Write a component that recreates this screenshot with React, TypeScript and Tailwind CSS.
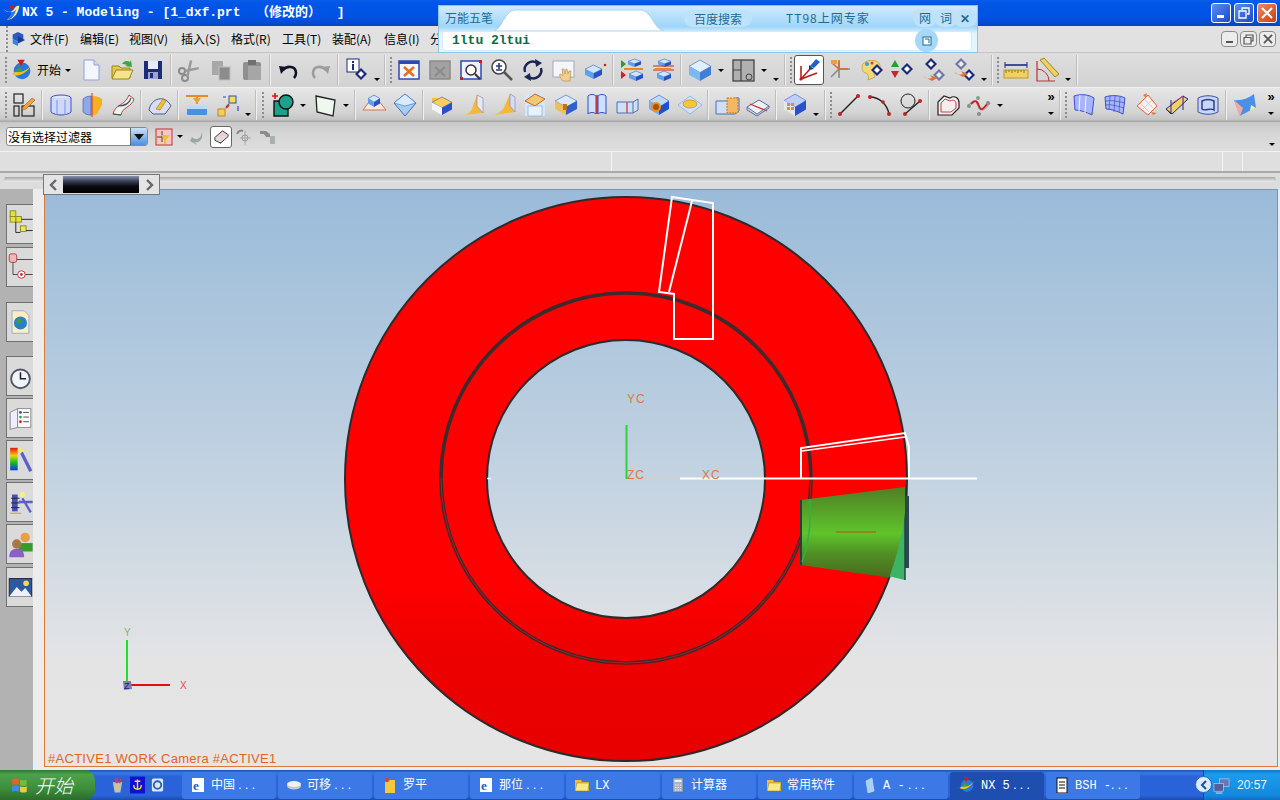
import React from 'react';

const I = ({ children }: { children: React.ReactNode }) => (
  <svg viewBox="0 0 26 26" className="w-[26px] h-[26px]">{children}</svg>
);

// isometric box used by most of the modeling icons
const Cube = ({ x = 4, y = 5, w = 18, h = 16, top = '#cfe6fb', left = '#5f9ff0', right = '#2450c8' }: { x?: number; y?: number; w?: number; h?: number; top?: string; left?: string; right?: string }) => {
  const d = h * 0.3;
  return (
    <g>
      <polygon points={`${x},${y + d} ${x + w / 2},${y} ${x + w},${y + d} ${x + w / 2},${y + 2 * d}`} fill={top} stroke="#3a62b8" strokeWidth="0.6" />
      <polygon points={`${x},${y + d} ${x + w / 2},${y + 2 * d} ${x + w / 2},${y + h} ${x},${y + h - d}`} fill={left} />
      <polygon points={`${x + w},${y + d} ${x + w / 2},${y + 2 * d} ${x + w / 2},${y + h} ${x + w},${y + h - d}`} fill={right} />
    </g>
  );
};

const Diamond = ({ x, y, fade }: { x: number; y: number; fade?: boolean }) => (
  <g opacity={fade ? 0.55 : 1}>
    <polygon points={`${x},${y - 6} ${x + 6},${y} ${x},${y + 6} ${x - 6},${y}`} fill="#1c2a7a" />
    <polygon points={`${x},${y - 3} ${x + 3},${y} ${x},${y + 3} ${x - 3},${y}`} fill="#ffffff" />
  </g>
);

const Globe = () => (
  <g>
    <circle cx="13" cy="14" r="9" fill="#2a78d8" />
    <path d="M7 12c3-3 6-1 6 2s-3 6-5 4z" fill="#3aa23a" />
    <path d="M2 17C7 22 20 17 24 5c-2 7-12 12-18 10z" fill="#f0c020" />
    <polygon points="8,2 16,2 12,9" fill="#d81818" />
  </g>
);

const Toolbar1 = {
  page: <I><path d="M6 3h10l5 5v15H6z" fill="#f4f6ff" stroke="#8fa0d8" /><path d="M16 3v5h5" fill="#d6dcf6" stroke="#8fa0d8" /></I>,
  open: <I><path d="M3 9h7l2 2h9v10H3z" fill="#e8c848" stroke="#9a8420" /><path d="M7 13h17l-4 9H3z" fill="#f6e48a" stroke="#9a8420" /><path d="M13 7c3-4 6-3 8-2l1-2 1 7-7-1 2-1c-2-1-3-1-5-1z" fill="#3ca83c" /></I>,
  save: <I><rect x="4" y="4" width="18" height="18" fill="#1c2c78" /><rect x="8" y="4" width="10" height="8" fill="#e8ecf8" /><rect x="8" y="15" width="10" height="7" fill="#9aa6c8" /><rect x="10" y="16" width="3" height="5" fill="#1c2c78" /></I>,
  cut: <I><circle cx="8" cy="21" r="3" fill="none" stroke="#8c8c8c" strokeWidth="2" /><circle cx="5" cy="14" r="3" fill="none" stroke="#8c8c8c" strokeWidth="2" /><path d="M9 19 16 4M8 13l14 0" stroke="#9a9a9a" strokeWidth="2.5" transform="rotate(-12 13 13)" /></I>,
  copy: <I><rect x="4" y="4" width="11" height="14" fill="#a8a8a8" /><rect x="11" y="10" width="11" height="13" fill="#8c8c8c" stroke="#bdbdbd" /></I>,
  paste: <I><rect x="4" y="5" width="18" height="18" rx="2" fill="#8f8f8f" /><rect x="9" y="3" width="8" height="5" fill="#6f6f6f" /><rect x="9" y="9" width="13" height="14" fill="#a6a6a6" /></I>,
  undo: <I><path d="M7 13c4-5 13-4 13 3 0 2-1 4-2 5" fill="none" stroke="#10142a" strokeWidth="2.6" /><polygon points="3,9 11,10 5,17" fill="#10142a" /></I>,
  redo: <I><path d="M19 13c-4-5-13-4-13 3 0 2 1 4 2 5" fill="none" stroke="#9c9c9c" strokeWidth="2.6" /><polygon points="23,9 15,10 21,17" fill="#9c9c9c" /></I>,
  info: <I><rect x="3" y="2" width="12" height="13" fill="#fff" stroke="#1c2a7a" /><rect x="8" y="4" width="2" height="2" fill="#1c2a7a" /><rect x="8" y="7" width="2" height="6" fill="#1c2a7a" /><Diamond x={17} y={17} /></I>,
  fit: <I><rect x="3" y="4" width="20" height="18" fill="#f4f6ff" stroke="#2a4ab0" strokeWidth="1.5" /><rect x="3" y="4" width="20" height="3" fill="#2a4ab0" /><path d="M8 10l10 9M18 10 8 19" stroke="#e8701a" strokeWidth="2.6" /></I>,
  fitOff: <I><rect x="3" y="4" width="20" height="18" fill="#a2a2a2" stroke="#8a8a8a" strokeWidth="1.5" /><path d="M8 10l10 9M18 10 8 19" stroke="#8a8a8a" strokeWidth="2" /></I>,
  zoomWin: <I><rect x="3" y="4" width="20" height="18" fill="#eef3ff" stroke="#2a4ab0" strokeWidth="1.5" /><circle cx="13" cy="13" r="5" fill="#fff" stroke="#333" strokeWidth="1.5" /><path d="m17 17 5 5" stroke="#333" strokeWidth="2" /><rect x="2" y="20" width="3" height="3" fill="#c82020" /><rect x="21" y="3" width="3" height="3" fill="#c82020" /></I>,
  zoom: <I><circle cx="10" cy="10" r="7" fill="#fff" stroke="#444" strokeWidth="1.6" /><path d="M7 9h6M10 6v6M7 13h6" stroke="#2a3a70" strokeWidth="1.6" /><path d="m15 15 8 8" stroke="#555" strokeWidth="2.6" /></I>,
  rotate: <I><path d="M5 15a8 8 0 0 1 12-9M21 11a8 8 0 0 1-12 9" fill="none" stroke="#1a2550" strokeWidth="2.4" /><polygon points="15,2 22,6 16,10" fill="#1a2550" /><polygon points="11,24 4,20 10,16" fill="#1a2550" /></I>,
  pan: <I><rect x="2" y="4" width="21" height="16" fill="#f4f6fb" stroke="#a8a8c0" /><path d="M12 24c-3-3-4-6-3-7 1 0 2 1 3 2l-1-7h2l1 5 1-5h1l1 5 1-3h2l-1 10z" fill="#f2cf90" stroke="#b08840" strokeWidth="0.6" /></I>,
  persp: <I><Cube x={3} y={8} w={17} h={14} /><circle cx="23" cy="8" r="1.3" fill="#d02020" /></I>,
  stack1: <I><polygon points="2,3 7,7 2,11" fill="#22a030" /><polygon points="2,14 7,18 2,22" fill="#d02020" /><Cube x={9} y={2} w={13} h={8} /><rect x="5" y="11" width="19" height="2" fill="#e88a20" /><Cube x={10} y={14} w={14} h={10} /></I>,
  stack2: <I><Cube x={8} y={2} w={13} h={8} /><path d="M3 13h21M3 9h21" stroke="#d02020" strokeWidth="1" /><rect x="5" y="11" width="16" height="2" fill="#e88a20" /><Cube x={7} y={14} w={14} h={10} /></I>,
  cube: <I><Cube x={2} y={3} w={22} h={21} top="#e0f0fc" left="#7ab8f0" right="#3f7fd8" /></I>,
  sheet: <I><rect x="3" y="3" width="21" height="21" fill="#b0b0b0" stroke="#444" strokeWidth="1.3" /><path d="M11 3v21M3 13h8" stroke="#444" strokeWidth="1.2" /><circle cx="19" cy="20" r="3" fill="none" stroke="#444" /></I>,
  wcs: <I><path d="M5 9v13l16-6M5 22l9-10" fill="none" stroke="#b82020" strokeWidth="1.6" /><circle cx="5" cy="22" r="1.6" fill="#b82020" /><path d="m14 9 6-7 4 3-6 6z" fill="#2060d0" /><polygon points="13,8 18,12 13,13" fill="#163a90" /></I>,
  axes: <I><path d="M12 5v16M12 12h11M12 12l-8 8" stroke="#8a8a8a" strokeWidth="1.6" /><path d="M12 3v9h9M12 12 5 6" fill="none" stroke="#d86a20" strokeWidth="1.6" /><rect x="4" y="3" width="6" height="4" fill="#e8a040" /></I>,
  paint: <I><path d="M4 10c0-8 16-9 18-2 1 4-3 4-5 4-2 2-1 5 0 8l-7 3c1-4 0-6-2-7-3 0-4-3-4-6z" fill="#f4d878" stroke="#a88a30" strokeWidth="0.6" /><circle cx="9" cy="7" r="2" fill="#2fa0e0" /><circle cx="14" cy="6" r="1.5" fill="#d84040" /><Diamond x={19} y={13} /></I>,
  flow: <I><polygon points="6,3 10,10 2,10" fill="#22a030" /><polygon points="6,21 10,14 2,14" fill="#d02020" /><Diamond x={18} y={12} /></I>,
  swap1: <I><Diamond x={11} y={7} /><Diamond x={19} y={18} fade /><path d="M3 19c4 3 6 3 9 2l-2-3 7 3-5 3z" fill="#e07030" /></I>,
  swap2: <I><Diamond x={10} y={7} fade /><Diamond x={18} y={18} /><path d="M3 15c3 3 6 3 9 2l-2-3 7 3-5 3z" fill="#e07030" /></I>,
  ruler: <I><rect x="1" y="13" width="24" height="8" fill="#f0d060" stroke="#b89a30" /><path d="M3 13v3M6 13v2M9 13v3M12 13v2M15 13v3M18 13v2M21 13v3" stroke="#8a7020" /><path d="M2 8h22" stroke="#1c2a8a" strokeWidth="1.6" /><path d="M2 5v6M24 5v6" stroke="#1c2a8a" /></I>,
  protractor: <I><path d="M3 4v20h18" fill="none" stroke="#c03030" strokeWidth="1.2" /><path d="M3 12a12 12 0 0 1 12 12" fill="none" stroke="#c03030" /><path d="m6 3 4-2 15 16-4 3z" fill="#f0d060" stroke="#9a8430" /></I>,
};

const Toolbar2 = {
  sketch: <I><rect x="3" y="2" width="9" height="9" fill="none" stroke="#222" strokeWidth="1.2" /><rect x="3" y="14" width="5" height="10" fill="none" stroke="#222" strokeWidth="1.2" /><rect x="11" y="14" width="12" height="10" fill="none" stroke="#222" strokeWidth="1.2" /><path d="m12 15 9-9 3 2-9 9-4 1z" fill="#f0a040" stroke="#8a4a10" strokeWidth="0.5" /></I>,
  extrude: <I><ellipse cx="13" cy="6" rx="10" ry="3" fill="#dfe6fb" stroke="#3a50c8" /><path d="M3 6v14c4 4 16 4 20 0V6" fill="#cfd8f8" stroke="#3a50c8" /><path d="M9 8v15M17 8v15" stroke="#8090e0" /></I>,
  revolve: <I><path d="M4 7c3-4 15-4 19 0v6l-5 9c-3 2-9 2-12 0z" fill="#f6b020" /><path d="M4 7v13c2 2 5 3 8 3V4C9 4 6 5 4 7z" fill="#8fa8e8" stroke="#3a50c8" strokeWidth="0.6" /><path d="M13 1v24" stroke="#c03030" /></I>,
  sweep: <I><path d="M3 22C5 12 15 14 19 3l5 4c-2 8-12 8-13 16z" fill="#f4f0f0" stroke="#c04040" /><path d="M3 22 11 23M8 14c5 0 11-1 13-8" fill="none" stroke="#305a60" strokeWidth="1.2" /></I>,
  trim: <I><path d="M2 18C4 6 18 2 24 14l-6 8H6z" fill="#d8ddf0" stroke="#4a5a90" /><path d="m9 17 7-10 3 2-6 9z" fill="#f0c030" stroke="#8a6a10" strokeWidth="0.5" /></I>,
  pad: <I><rect x="3" y="14" width="20" height="9" rx="1" fill="#4a90e0" /><rect x="3" y="14" width="20" height="3" fill="#bcd8f8" /><path d="M2 4h22M13 4v8" stroke="#e88a20" strokeWidth="2" /><polygon points="9,6 17,6 13,12" fill="#e8a040" /></I>,
  pattern: <I><rect x="14" y="4" width="7" height="7" fill="#f0e050" stroke="#2a50b0" /><rect x="3" y="17" width="7" height="7" fill="#f0d060" stroke="#c88020" /><path d="M8 5h3M11 15l3-3M23 14v5" stroke="#2a50b0" strokeWidth="1.2" /><path d="M11 16l3-3" stroke="#e03020" strokeWidth="2" /></I>,
  feature: <I><path d="M4 9v15h14V9z" fill="#1fa08a" stroke="#111" strokeWidth="1.4" /><circle cx="16" cy="10" r="7" fill="#1fa08a" stroke="#111" strokeWidth="1.4" /><path d="M2 4h6M5 1v6" stroke="#e01010" strokeWidth="1.6" /></I>,
  plane: <I><polygon points="4,4 23,8 21,24 5,20" fill="#eef8ee" stroke="#222" strokeWidth="1.3" /></I>,
  cham: <I><polygon points="13,3 25,18 2,18" fill="#f8e8e0" stroke="#c87850" /><Cube x={7} y={3} w={12} h={12} /></I>,
  blend: <I><polygon points="13,2 24,11 13,24 2,11" fill="#a8cdf4" stroke="#3a70c0" /><polygon points="13,2 24,11 13,14 2,11" fill="#d8ecfc" stroke="#3a70c0" strokeWidth="0.6" /></I>,
  box: <I><rect x="3" y="6" width="14" height="6" fill="#f6c030" /><Cube x={3} y={5} w={20} h={18} top="#f8d060" left="#f4f4ff" right="#2a50c8" /></I>,
  sw1: <I><path d="M17 3l6 3v15l-20 2c6-1 9-4 10-9z" fill="#f6b838" /><path d="M17 3v11l6 7V6z" fill="#e8e8f4" stroke="#7a80c0" strokeWidth="0.6" /></I>,
  sw2: <I><path d="M19 2l5 3v15L3 23c6-2 10-6 11-10z" fill="#f6b838" /><path d="M19 2v12l5 6V5z" fill="#d8dcf4" stroke="#7a80c0" strokeWidth="0.6" /></I>,
  slab: <I><rect x="3" y="2" width="20" height="22" fill="#cfe8fc" /><polygon points="3,9 13,2 23,7 13,14" fill="#f4c870" stroke="#c86030" /><rect x="6" y="14" width="14" height="10" fill="#e8f2fc" stroke="#7aa0d8" strokeWidth="0.6" /></I>,
  hole: <I><Cube x={2} y={3} w={22} h={20} top="#dce8fb" left="#f0c050" right="#3060c8" /><rect x="10" y="12" width="4" height="6" fill="#c87018" /></I>,
  book: <I><path d="M4 4c2-2 6-2 8 0v18c-2-2-6-2-8 0z" fill="#cfe0fb" stroke="#2a50c0" /><path d="M14 4c2-2 6-2 8 0v18c-2-2-6-2-8 0z" fill="#cfe0fb" stroke="#2a50c0" /><path d="M13 3v19" stroke="#d02020" strokeWidth="1.6" /></I>,
  slice: <I><path d="M2 10h16l5-3v11l-5 3H2z" fill="#cfe0f4" stroke="#4a70b0" /><path d="M12 10v11" stroke="#c06060" strokeWidth="1.6" /><path d="M18 10v11" stroke="#4a70b0" /></I>,
  bore: <I><Cube x={3} y={3} w={20} h={20} top="#bcd8fb" left="#7fa8f0" right="#2250c8" /><circle cx="10" cy="15" r="5" fill="#f09018" /><circle cx="10" cy="15" r="3" fill="#a85010" /></I>,
  dome: <I><polygon points="13,4 25,13 13,22 1,13" fill="#cfe2f6" stroke="#9ab8e0" /><ellipse cx="13" cy="12" rx="7" ry="4" fill="#f4c838" stroke="#b87820" strokeWidth="0.6" /></I>,
  half: <I><path d="M2 9h14l5-3 4 0v13l-4 3H2z" fill="#cfe0f4" stroke="#4a70b0" /><rect x="13" y="6" width="11" height="15" fill="#f4b860" stroke="#c87030" strokeDasharray="2 1" /></I>,
  cutP: <I><polygon points="2,15 14,8 24,14 12,22" fill="#eef2f8" stroke="#5a70a0" /><path d="M5 12 22 19" stroke="#c83030" strokeWidth="1.2" /><path d="M2 15v3l10 6 12-8v-2" fill="none" stroke="#5a70a0" /></I>,
  grid: <I><Cube x={2} y={2} w={22} h={22} top="#bcd0f8" left="#e8e4f0" right="#2a50d0" /><g fill="#e0902a"><rect x="5" y="11" width="3" height="3" /><rect x="9" y="11" width="3" height="3" /><rect x="5" y="15" width="3" height="3" /><rect x="9" y="15" width="3" height="3" /></g></I>,
  line: <I><path d="M4 22 22 4" stroke="#222" strokeWidth="1.5" /><circle cx="4" cy="22" r="2" fill="#c82020" /><circle cx="22" cy="4" r="2" fill="#c82020" /></I>,
  arc: <I><path d="M3 5c9 0 17 7 19 17" fill="none" stroke="#222" strokeWidth="1.5" /><circle cx="3" cy="5" r="2" fill="#c82020" /><circle cx="22" cy="22" r="2" fill="#c82020" /><circle cx="16" cy="10" r="1.8" fill="#c82020" /></I>,
  circleL: <I><circle cx="10" cy="9" r="7" fill="none" stroke="#222" /><path d="m7 22 15-13" stroke="#222" strokeWidth="1.4" /><circle cx="7" cy="22" r="2" fill="#c82020" /><circle cx="22" cy="9" r="2" fill="#c82020" /></I>,
  curveBox: <I><path d="M3 23V10l6-6 6 2c5-3 9 0 9 5v5l-7 7z" fill="#f6eeee" stroke="#222" strokeWidth="1.2" /><path d="M6 20V11l4-4 5 2c4-2 6 0 6 3v4l-5 4z" fill="none" stroke="#c04040" /></I>,
  spline: <I><path d="M2 14c5-6 7-8 10 0s8 2 12-3" fill="none" stroke="#999" strokeWidth="1.2" /><path d="M5 12c4-4 6-4 8 2s5 2 8-2" fill="none" stroke="#c82020" strokeWidth="1.8" /><circle cx="3" cy="14" r="2" fill="#7a9a7a" /><circle cx="12" cy="6" r="2" fill="#8a9a8a" /><circle cx="13" cy="22" r="2" fill="#8a8a8a" /><circle cx="22" cy="11" r="2" fill="#8a8a8a" /></I>,
  surf1: <I><path d="M3 4c6-2 14-2 20 2l-2 17c-6-3-12-5-17-5z" fill="#a8b4fc" stroke="#3a50d0" /><path d="M9 3 8 19M15 4l-1 17" stroke="#f4f6ff" /><path d="M20 22l2-2" stroke="#888" strokeWidth="2" /></I>,
  surf2: <I><path d="M3 5c6-2 14-2 20 1l-2 16c-6-3-12-5-17-5z" fill="#a8b4fc" stroke="#3a50d0" /><path d="M8 4 7 18M13 4l-1 16M18 5l-1 15M3 9c6-1 12 0 20 2M3 13c6-1 12 1 19 3" stroke="#3a50d0" strokeWidth="0.7" fill="none" /></I>,
  surf3: <I><path d="M4 14 15 3l9 11-9 9z" fill="#f8f0ee" stroke="#d86040" /><path d="M7 11l9 9M11 7l9 9M10 17l9-9" stroke="#e0b0a8" strokeWidth="0.7" /><path d="M14 1l-4 2 3 3zM24 21l-4 2-2-3z" fill="#e08030" /></I>,
  surf4: <I><polygon points="2,17 19,4 24,7 8,22" fill="#f4d060" stroke="#1c2a8a" /><path d="M2 17l5 5V8M19 4v14" stroke="#1c2a8a" fill="none" /><path d="M7 12l12-8" stroke="#c84080" /></I>,
  surf5: <I><path d="M3 6c6-3 14-3 20 0v14c-6 3-14 3-20 0z" fill="#c8d4f8" stroke="#3a50a0" /><path d="M7 9c4-2 8-2 12 0v9c-4-3-9 2-12-1z" fill="none" stroke="#223a80" strokeWidth="1.4" /></I>,
  surf6: <I><path d="M2 8c7 1 13-1 20-6l2 14c-7 3-13 6-16 8z" fill="#4a90e8" /><path d="M8 24c-2-4-4-10-6-16l9 8z" fill="#f4a8a0" /><polygon points="24,16 18,19 19,13" fill="#e8f0b0" /></I>,
};

const TrayIcons = {
  ie: <svg viewBox="0 0 16 16" className="w-4 h-4"><rect x="2" y="1" width="12" height="14" fill="#fff" /><text x="3" y="13" fontSize="13" fontWeight="700" fill="#1c5cc8" fontFamily="Liberation Serif">e</text></svg>,
  drive: <svg viewBox="0 0 16 16" className="w-4 h-4"><ellipse cx="8" cy="9" rx="7" ry="3.5" fill="#c8c8c8" /><ellipse cx="8" cy="7" rx="7" ry="3" fill="#f0f0f0" /></svg>,
  note: <svg viewBox="0 0 16 16" className="w-4 h-4"><rect x="3" y="3" width="10" height="13" fill="#f4c842" /><circle cx="5" cy="3" r="2.2" fill="#d84040" /></svg>,
  folder: <svg viewBox="0 0 16 16" className="w-4 h-4"><path d="M1 3h6l1 2h7v9H1z" fill="#e8c040" /><path d="M3 6h12l-1 8H1z" fill="#fbe88a" stroke="#9a7a10" strokeWidth="0.5" /></svg>,
  calc: <svg viewBox="0 0 16 16" className="w-4 h-4"><rect x="3" y="1" width="10" height="14" fill="#a8b4c8" stroke="#5a6a80" strokeWidth="0.6" /><rect x="4.5" y="3" width="7" height="2" fill="#e8f0f8" /><path d="M5 8h6M5 10.500h6M5 13h6" stroke="#eef" strokeDasharray="1.500 1" /></svg>,
  doc: <svg viewBox="0 0 16 16" className="w-4 h-4"><path d="M4 4 10 1l2 13-6 2z" fill="#a8d0f0" stroke="#eef" strokeWidth="0.5" /></svg>,
  nx: <svg viewBox="0 0 26 26" className="w-[18px] h-[18px]"><Globe /></svg>,
  pad: <svg viewBox="0 0 16 16" className="w-4 h-4"><rect x="3" y="1" width="10" height="15" fill="#fff" stroke="#111" /><path d="M5 5h6M5 8h6M5 11h6" stroke="#111" /></svg>,
};

const Slot = ({ children }: { children: React.ReactNode }) => (
  <div className="w-[31px] h-full flex items-center justify-center shrink-0">{children}</div>
);
const Sep = () => (
  <div className="w-[6px] h-full flex justify-center shrink-0 py-[2px]">
    <div className="w-[2px] h-full border-l border-[#bdbdbd] border-r-0 bg-[#f0f0f0]" />
  </div>
);
const Grip = () => (
  <div className="w-[5px] h-full flex flex-col justify-center items-center gap-[2px] shrink-0">
    {[0, 1, 2, 3, 4, 5, 6].map(i => <div key={i} className="w-[2px] h-[2px] bg-[#8c8c8c]" />)}
  </div>
);
const Arr = () => (
  <div className="w-[12px] h-full flex items-end justify-center pb-[6px] shrink-0">
    <div className="border-x-[3px] border-x-transparent border-t-[3px] border-t-black" />
  </div>
);
const MidArr = () => (
  <div className="w-[10px] h-full flex items-center justify-center shrink-0">
    <div className="border-x-[3px] border-x-transparent border-t-[3px] border-t-black" />
  </div>
);
const MidArrBottom = () => (
  <div className="w-[10px] h-full flex items-end justify-center pb-[6px] shrink-0">
    <div className="border-x-[3px] border-x-transparent border-t-[3px] border-t-black" />
  </div>
);
const CenterArr = () => (
  <div className="w-[12px] h-full flex items-center justify-center shrink-0">
    <div className="border-x-[3px] border-x-transparent border-t-[3px] border-t-black" />
  </div>
);
const More = () => (
  <div className="w-[12px] h-full flex flex-col items-center justify-between pt-[4px] pb-[7px] shrink-0">
    <span className="text-[13px] leading-[10px] font-bold text-black font-['Liberation_Sans',sans-serif]">»</span>
    <div className="border-x-[3px] border-x-transparent border-t-[3px] border-t-black" />
  </div>
);

const menus = [
  { label: '文件(F)', w: 'w-[50px]' },
  { label: '编辑(E)', w: 'w-[49px]' },
  { label: '视图(V)', w: 'w-[52px]' },
  { label: '插入(S)', w: 'w-[50px]' },
  { label: '格式(R)', w: 'w-[51px]' },
  { label: '工具(T)', w: 'w-[50px]' },
  { label: '装配(A)', w: 'w-[52px]' },
  { label: '信息(I)', w: 'w-[46px]' },
  { label: '分', w: 'w-[8px] overflow-hidden' },
];

const dock = [
  { mt: 'mt-[15px]', icon: <svg viewBox="0 0 27 32" className="w-[26px] h-[30px]"><rect x="3" y="2" width="6" height="6" fill="#e8e040" stroke="#8a8a20" /><rect x="9" y="8" width="6" height="6" fill="#e8e040" stroke="#8a8a20" /><rect x="3" y="8" width="6" height="6" fill="#e8e040" stroke="#8a8a20" /><rect x="14" y="18" width="6" height="6" fill="#f0e850" stroke="#8a8a20" /><path d="M15 11h12M9 14v11h5M20 23h7" stroke="#222" fill="none" /></svg> },
  { mt: 'mt-[3px]', icon: <svg viewBox="0 0 27 32" className="w-[26px] h-[30px]"><rect x="2" y="2" width="8" height="9" rx="2" fill="#f0b8b8" stroke="#b04040" /><circle cx="15" cy="24" r="4" fill="#fff" stroke="#c83030" /><circle cx="15" cy="24" r="1.500" fill="#c83030" /><path d="M10 8h17M6 11v13h5M19 24h8" stroke="#444" fill="none" /></svg> },
  { mt: 'mt-[15px]', icon: <svg viewBox="0 0 27 32" className="w-[26px] h-[30px]"><path d="M5 4h13l5 5v19H5z" fill="#f8f0c0" stroke="#a0a8d0" /><circle cx="14" cy="17" r="7" fill="#2a80c8" /><path d="M10 13c3-2 6-1 5 2s-4 4-5 3z" fill="#3aa040" /></svg> },
  { mt: 'mt-[14px]', icon: <svg viewBox="0 0 27 32" className="w-[26px] h-[30px]"><circle cx="14" cy="19" r="10" fill="#f0f4fc" stroke="#556" strokeWidth="2" /><path d="M14 12v7h6" stroke="#222" strokeWidth="1.6" fill="none" /></svg> },
  { mt: 'mt-[2px]', icon: <svg viewBox="0 0 27 32" className="w-[26px] h-[30px]"><path d="M3 10l8-4v20l-8 2z" fill="#eef" stroke="#888" /><rect x="11" y="6" width="14" height="20" fill="#fff" stroke="#888" /><circle cx="14" cy="10" r="1.500" fill="#3050b0" /><circle cx="14" cy="15" r="1.500" fill="#30a050" /><circle cx="14" cy="20" r="1.500" fill="#d02020" /><path d="M17 10h6M17 15h6M17 20h6" stroke="#444" /></svg> },
  { mt: 'mt-[2px]', icon: <svg viewBox="0 0 27 32" className="w-[26px] h-[30px]"><defs><linearGradient id="rainbow" x1="0" x2="0" y1="0" y2="1"><stop offset="0" stopColor="#e81010" /><stop offset="0.35" stopColor="#f0d010" /><stop offset="0.65" stopColor="#10c020" /><stop offset="1" stopColor="#1030e8" /></linearGradient></defs><rect x="3" y="3" width="8" height="24" fill="url(#rainbow)" /><path d="M15 8l10 20" stroke="#5a60c8" strokeWidth="3.500" /><path d="M14 3v6M11 6h6" stroke="#f4f060" strokeWidth="1.500" /></svg> },
  { mt: 'mt-[2px]', icon: <svg viewBox="0 0 27 32" className="w-[26px] h-[30px]"><rect x="5" y="8" width="6" height="18" fill="#4a50b0" /><path d="M4 12h9M4 17h9M4 22h9" stroke="#222" /><path d="M12 16h15M16 12l9 15" stroke="#5a60c8" strokeWidth="2.500" /><circle cx="16" cy="8" r="3" fill="#f8f080" /><path d="M3 28h12" stroke="#c0a020" /></svg> },
  { mt: 'mt-[2px]', icon: <svg viewBox="0 0 27 32" className="w-[26px] h-[30px]"><circle cx="19" cy="9" r="5" fill="#e8a040" /><path d="M12 15h15v9H12z" fill="#3a9a30" /><circle cx="10" cy="16" r="5" fill="#a87848" /><path d="M2 30c0-6 3-9 8-9s8 3 8 9z" fill="#8a60c8" /></svg> },
  { mt: 'mt-[3px]', icon: <svg viewBox="0 0 27 32" className="w-[26px] h-[30px]"><rect x="2" y="7" width="24" height="19" fill="#2a5aa0" stroke="#223" /><path d="M2 26l8-10 5 5 4-4 7 9z" fill="#f0f0f8" /><circle cx="20" cy="12" r="3" fill="#f0e040" /></svg> },
];

const taskButtons = [
  { icon: TrayIcons.ie, label: '中国', dots: ' . . .' },
  { icon: TrayIcons.drive, label: '可移', dots: ' . . .' },
  { icon: TrayIcons.note, label: '罗平', dots: '' },
  { icon: TrayIcons.ie, label: '那位', dots: ' . . .' },
  { icon: TrayIcons.folder, label: 'LX', dots: '' },
  { icon: TrayIcons.calc, label: '计算器', dots: '' },
  { icon: TrayIcons.folder, label: '常用软件', dots: '' },
  { icon: TrayIcons.doc, label: 'A -', dots: ' . . .' },
  { icon: TrayIcons.nx, label: 'NX 5', dots: ' . . .', active: true },
  { icon: TrayIcons.pad, label: 'BSH -', dots: '. . .' },
];

const ImePill = ({ children, className }: { children: React.ReactNode; className: string }) => (
  <div className={`rounded-full bg-[#bfe2fb] text-[#1c6a94] flex items-center justify-center ${className}`}>{children}</div>
);

function ImeWindow() {
  return (
    <div className="absolute left-[438px] top-[5px] w-[540px] h-[48px] z-20 border border-[#8cc4ea] bg-[linear-gradient(180deg,#cfeafc_0%,#9fd6fa_45%,#e4f4fd_60%,#e8f5fd_100%)] flex flex-col text-[12px] text-[#1c6a94]">
      <div className="h-[24px] flex items-center relative">
        <span className="ml-[6px] w-[49px]">万能五笔</span>
        <svg viewBox="0 0 175 22" className="absolute left-[55px] top-[3px] w-[175px] h-[22px]">
          <path d="M0 22C8 20 10 3 20 1h128c10 2 12 19 22 21z" fill="#ffffff" stroke="#a8d2ee" />
        </svg>
        <ImePill className="absolute left-[245px] top-[4px] w-[68px] h-[17px]">百度搜索</ImePill>
        <span className="absolute left-[347px] top-[3px] tracking-[1px]">TT98上网专家</span>
        <ImePill className="absolute left-[474px] top-[3px] w-[24px] h-[18px]">网</ImePill>
        <ImePill className="absolute left-[495px] top-[3px] w-[24px] h-[18px]">词</ImePill>
        <ImePill className="absolute left-[514px] top-[3px] w-[24px] h-[18px] font-bold">✕</ImePill>
      </div>
      <div className="mx-[3px] mt-[1px] h-[20px] w-[530px] bg-white rounded-[3px] border border-[#d4ebfa] flex items-center pl-[9px] relative z-10">
        <span className="font-['Liberation_Mono',monospace] font-bold text-[13px] text-[#0b6b4a]">1ltu 2ltui</span>
      </div>
      <div className="absolute left-[476px] top-[23px] w-[23px] h-[23px] rounded-full bg-[#a8d8f8] z-20 flex items-center justify-center">
        <svg viewBox="0 0 10 10" className="w-[10px] h-[10px]"><rect x="1" y="1" width="8" height="8" fill="#fff" stroke="#1c6a94" /><path d="M3 3h4v4" fill="none" stroke="#1c6a94" /></svg>
      </div>
    </div>
  );
}

function TitleBar() {
  return (
    <div className="h-[26px] flex items-center bg-[linear-gradient(180deg,#0a5ce8_0%,#0056e8_12%,#0152e2_70%,#0145c4_100%)] shrink-0">
      <svg viewBox="0 0 26 26" className="w-[18px] h-[18px] ml-[2px]">
        <path d="M2 6c4 6 13 7 16 0 3-4 6-4 7-3-1 10-8 20-18 20 6-5 8-9 5-12C8 12 4 10 2 6z" fill="#f0e8a0" />
        <polygon points="10,2 18,2 14,9" fill="#d81818" />
        <path d="M7 23c6-5 8-9 5-12 4 1 6 0 8-3-1 8-6 14-13 15z" fill="#3a70d8" />
      </svg>
      <span className="ml-[2px] font-['Liberation_Mono','Noto_Sans_CJK_SC',monospace] font-bold text-[13px] text-white whitespace-pre">NX 5 - Modeling - [1_dxf.prt  （修改的）  ]</span>
      <div className="ml-auto flex gap-[3px] pr-[3px] pb-[1px]">
        <div className="w-[20px] h-[20px] rounded-[3px] border border-white bg-[linear-gradient(135deg,#5a90f0,#1c48c8)] flex items-end pl-[5px] pb-[4px]"><div className="w-[7px] h-[3px] bg-white" /></div>
        <div className="w-[20px] h-[20px] rounded-[3px] border border-white bg-[linear-gradient(135deg,#5a90f0,#1c48c8)] flex items-center justify-center">
          <svg viewBox="0 0 12 12" className="w-[12px] h-[12px]"><path d="M4 3V1h7v6H9M1 4h7v7H1z" fill="none" stroke="#fff" strokeWidth="1.3" /></svg>
        </div>
        <div className="w-[20px] h-[20px] rounded-[3px] border border-white bg-[linear-gradient(135deg,#ec8a68,#cf3c10)] flex items-center justify-center">
          <svg viewBox="0 0 12 12" className="w-[12px] h-[12px]"><path d="m1 1 10 10M11 1 1 11" stroke="#fff" strokeWidth="2" /></svg>
        </div>
      </div>
    </div>
  );
}

function MenuBar() {
  return (
    <div className="h-[26px] flex items-center bg-[#e1e1e1] shrink-0 text-[12px] text-black">
      <div className="ml-[4px] mr-[1px]"><Grip /></div>
      <svg viewBox="0 0 18 18" className="w-[16px] h-[16px] mr-[4px]">
        <polygon points="9,1 15,4 15,9 9,12 3,9 3,4" fill="#2a5ac0" />
        <polygon points="9,6 17,10 9,14" fill="#1c3a90" />
        <polygon points="3,9 9,12 9,17 3,14" fill="#3a80e0" />
      </svg>
      {menus.map(m => <span key={m.label} className={`${m.w} shrink-0 whitespace-nowrap`}>{m.label}</span>)}
      <div className="ml-auto flex gap-[2px] pr-[4px]">
        <div className="w-[17px] h-[16px] rounded-[4px] border border-[#8c8c8c] bg-[#ececec] flex items-end justify-center pb-[3px]"><div className="w-[7px] h-[2px] bg-[#555]" /></div>
        <div className="w-[17px] h-[16px] rounded-[4px] border border-[#8c8c8c] bg-[#ececec] flex items-center justify-center"><svg viewBox="0 0 11 11" className="w-[11px] h-[11px]"><path d="M3 3V1h7v6H8M1 3.500h7V10H1z" fill="none" stroke="#555" strokeWidth="1.2" /></svg></div>
        <div className="w-[17px] h-[16px] rounded-[4px] border border-[#8c8c8c] bg-[#ececec] flex items-center justify-center"><svg viewBox="0 0 11 11" className="w-[10px] h-[10px]"><path d="m1 1 9 9M10 1l-9 9" stroke="#555" strokeWidth="2" /></svg></div>
      </div>
    </div>
  );
}

function RowOne() {
  const t = Toolbar1;
  return (
    <div className="h-[35px] flex items-stretch shrink-0 bg-[linear-gradient(180deg,#dedede_0%,#d2d2d2_100%)] border-t border-[#c4c4c4]">
      <div className="ml-[3px]"><Grip /></div>
      <div className="w-[67px] flex items-center shrink-0 text-[12px] text-black">
        <svg viewBox="0 0 26 26" className="w-[24px] h-[24px] ml-[2px]"><Globe /></svg>
        <span className="ml-[3px]">开始</span>
        <div className="ml-[4px] border-x-[3px] border-x-transparent border-t-[3px] border-t-black" />
      </div>
      <Slot>{t.page}</Slot><Slot>{t.open}</Slot><Slot>{t.save}</Slot>
      <Sep />
      <Slot>{t.cut}</Slot><Slot>{t.copy}</Slot><Slot>{t.paste}</Slot>
      <Sep />
      <Slot>{t.undo}</Slot><Slot>{t.redo}</Slot>
      <Sep />
      <Slot>{t.info}</Slot><MidArrBottom />
      <Sep />
      <Grip />
      <Slot>{t.fit}</Slot><Slot>{t.fitOff}</Slot><Slot>{t.zoomWin}</Slot><Slot>{t.zoom}</Slot><Slot>{t.rotate}</Slot><Slot>{t.pan}</Slot><Slot>{t.persp}</Slot>
      <Sep />
      <Slot>{t.stack1}</Slot><Slot>{t.stack2}</Slot>
      <Sep />
      <Slot>{t.cube}</Slot><CenterArr />
      <Slot>{t.sheet}</Slot><CenterArr /><Arr />
      <Sep />
      <Grip />
      <Slot>
        <div className="w-[30px] h-[30px] rounded-[3px] border border-[#555] bg-white flex items-center justify-center">{t.wcs}</div>
      </Slot>
      <Slot>{t.axes}</Slot><Slot>{t.paint}</Slot><Slot>{t.flow}</Slot><Slot>{t.swap1}</Slot><Slot>{t.swap2}</Slot><MidArrBottom />
      <Sep />
      <Grip />
      <Slot>{t.ruler}</Slot><Slot>{t.protractor}</Slot><Arr />
      <Sep />
    </div>
  );
}

function RowTwo() {
  const t = Toolbar2;
  return (
    <div className="h-[35px] flex items-stretch shrink-0 bg-[linear-gradient(180deg,#e6e6e6_0%,#d4d4d4_70%,#c6c6c6_92%,#a2a2a2_100%)] border-t border-[#f0f0f0]">
      <div className="ml-[3px]"><Grip /></div>
      <Slot>{t.sketch}</Slot>
      <Sep />
      <Slot>{t.extrude}</Slot><Slot>{t.revolve}</Slot><Slot>{t.sweep}</Slot>
      <Sep />
      <Slot>{t.trim}</Slot>
      <Sep />
      <Slot>{t.pad}</Slot><Slot>{t.pattern}</Slot><MidArrBottom />
      <Sep />
      <div className="ml-[1px]"><Grip /></div>
      <div className="w-[2px] shrink-0" />
      <Slot>{t.feature}</Slot><MidArr />
      <div className="w-[1px] shrink-0" />
      <Slot>{t.plane}</Slot><CenterArr />
      <Sep />
      <Slot>{t.cham}</Slot><Slot>{t.blend}</Slot>
      <Sep />
      <Slot>{t.box}</Slot><Slot>{t.sw1}</Slot><Slot>{t.sw2}</Slot><Slot>{t.slab}</Slot><Slot>{t.hole}</Slot><Slot>{t.book}</Slot><Slot>{t.slice}</Slot><Slot>{t.bore}</Slot><Slot>{t.dome}</Slot>
      <Sep />
      <Slot>{t.half}</Slot><Slot>{t.cutP}</Slot>
      <Sep />
      <Slot>{t.grid}</Slot><Arr />
      <Sep />
      <Grip />
      <Slot>{t.line}</Slot><Slot>{t.arc}</Slot><Slot>{t.circleL}</Slot>
      <Sep />
      <Slot>{t.curveBox}</Slot><Slot>{t.spline}</Slot><CenterArr />
      <div className="flex-1" />
      <More />
      <Sep />
      <Grip />
      <Slot>{t.surf1}</Slot><Slot>{t.surf2}</Slot><Slot>{t.surf3}</Slot><Slot>{t.surf4}</Slot><Slot>{t.surf5}</Slot>
      <Sep />
      <Slot>{t.surf6}</Slot>
      <div className="w-[5px] shrink-0" />
      <More />
      <div className="w-[3px] shrink-0" />
    </div>
  );
}

function FilterBar() {
  return (
    <div className="h-[30px] flex items-center shrink-0 bg-[linear-gradient(180deg,#c8c8c8_0%,#d6d6d6_40%,#dedede_100%)] border-b border-[#f2f2f2] relative">
      <div className="ml-[6px] w-[142px] h-[19px] bg-white border border-[#888] rounded-[3px] flex items-center justify-between overflow-hidden">
        <span className="text-[12px] pl-[1px] text-black">没有选择过滤器</span>
        <div className="w-[17px] h-full bg-[linear-gradient(180deg,#cfe0f8,#4a90e0)] border-l border-[#666] flex items-center justify-center">
          <div className="border-x-[5px] border-x-transparent border-t-[6px] border-t-[#111]" />
        </div>
      </div>
      <svg viewBox="0 0 18 18" className="ml-[7px] w-[18px] h-[18px]"><rect x="1" y="1" width="16" height="16" fill="#f4c8c0" stroke="#c03030" /><path d="M2 9h11M7 3v11" stroke="#444" /><polygon points="6,7 15,7 11,12 11,16 9,16 9,12" fill="#f0c030" /></svg>
      <div className="ml-[4px] border-x-[3px] border-x-transparent border-t-[3px] border-t-black" />
      <svg viewBox="0 0 16 16" className="ml-[6px] w-[16px] h-[16px]"><path d="M3 8c4 4 9 2 10-5 1 6-1 11-7 10l2 3-7-4z" fill="#9aa8a0" /></svg>
      <div className="ml-[5px] w-[22px] h-[22px] bg-white border border-[#666] rounded-[3px] flex items-center justify-center">
        <svg viewBox="0 0 18 18" className="w-[17px] h-[17px]"><polygon points="2,10 10,3 16,7 8,15" fill="#f4c8c8" stroke="#333" /><path d="M2 10v3l6 3 8-7V7M8 15v1" fill="#ddd" stroke="#333" /></svg>
      </div>
      <svg viewBox="0 0 18 18" className="ml-[3px] w-[18px] h-[18px]"><path d="M10 3v14M5 10h11" stroke="#a8a8a8" /><circle cx="10" cy="10" r="3" fill="none" stroke="#999" /><path d="M2 6c1-3 4-4 6-3" fill="none" stroke="#888" strokeWidth="2" /></svg>
      <svg viewBox="0 0 18 18" className="ml-[6px] w-[18px] h-[18px]"><path d="M1 3h6l4 3v3H7L5 6H1z" fill="#8c8c8c" /><rect x="11" y="8" width="5" height="8" fill="#a8b0b0" /></svg>
      <div className="absolute right-[5px] bottom-[5px] border-x-[3px] border-x-transparent border-t-[3px] border-t-black" />
    </div>
  );
}

function CueBar() {
  return (
    <div className="h-[21px] flex shrink-0 bg-[#dfdfdf] border-b-2 border-[#a9a9a9]">
      <div className="w-[612px] border-r border-[#f4f4f4]" />
      <div className="flex-1 border-r border-[#f4f4f4]" />
      <div className="w-[20px] border-r border-[#f4f4f4]" />
      <div className="w-[37px]" />
    </div>
  );
}

function TabStrip() {
  return (
    <div className="h-[16px] shrink-0 bg-[#dcdcdc] pt-[4px] px-[4px] relative">
      <div className="h-[5px] bg-[linear-gradient(180deg,#a8a8a8,#ececec)] rounded-[2px]" />
      <div className="absolute left-[43px] top-[1px] w-[117px] h-[21px] z-10 border border-[#777] bg-[#dcdcdc] flex">
        <div className="w-[19px] flex items-center justify-center bg-[#e4e4e4]">
          <svg viewBox="0 0 10 12" className="w-[10px] h-[12px]"><path d="M7 1 2 6l5 5" fill="none" stroke="#666" strokeWidth="2.4" /></svg>
        </div>
        <div className="flex-1 my-[1px] bg-[linear-gradient(180deg,#8a94ae_0%,#3a4058_30%,#0a0a10_60%,#000000_100%)]" />
        <div className="w-[20px] flex items-center justify-center bg-[#e4e4e4]">
          <svg viewBox="0 0 10 12" className="w-[10px] h-[12px]"><path d="m3 1 5 5-5 5" fill="none" stroke="#666" strokeWidth="2.4" /></svg>
        </div>
      </div>
    </div>
  );
}

function LeftDock() {
  return (
    <div className="w-[33px] shrink-0 bg-[#b2b2b2] flex flex-col items-end">
      {dock.map((d, i) => (
        <div key={i} className={`${d.mt} w-[27px] h-[40px] bg-[#dadada] border-t border-l border-b border-[#707070] flex items-center justify-center overflow-hidden`}>
          {d.icon}
        </div>
      ))}
    </div>
  );
}

// the model view: coordinates are the same as the screenshot's
function ModelView() {
  return (
    <svg viewBox="45 190 1232 576" className="w-full h-full block" preserveAspectRatio="none">
      <defs>
        <linearGradient id="sky" x1="0" x2="0" y1="0" y2="1">
          <stop offset="0" stopColor="#9abbd9" />
          <stop offset="0.5" stopColor="#c3d3e1" />
          <stop offset="0.82" stopColor="#e4e4e5" />
          <stop offset="1" stopColor="#e5e5e5" />
        </linearGradient>
        <linearGradient id="ringRed" x1="0" x2="0" y1="0" y2="1">
          <stop offset="0.68" stopColor="#ff0000" />
          <stop offset="0.8" stopColor="#ee0000" />
          <stop offset="1" stopColor="#e60000" />
        </linearGradient>
        <linearGradient id="bodyGreen" x1="0" x2="0" y1="0" y2="1">
          <stop offset="0" stopColor="#4f7e26" />
          <stop offset="0.5" stopColor="#5fc42a" />
          <stop offset="0.72" stopColor="#4f8f24" />
          <stop offset="1" stopColor="#4a651f" />
        </linearGradient>
        <clipPath id="outerClip"><circle cx="626" cy="479" r="281" /></clipPath>
      </defs>
      <rect x="45" y="190" width="1232" height="576" fill="url(#sky)" />

      <path fillRule="evenodd" d="M345 479a281 282 0 1 0 562 0a281 282 0 1 0-562 0zM487 479a139 139 0 1 1 278 0a139 139 0 1 1-278 0z" fill="url(#ringRed)" stroke="#2e2a2c" strokeWidth="2" />
      <circle cx="626" cy="478" r="185" fill="none" stroke="#3c2a2c" strokeWidth="3.6" />
      <path d="M441 478a185 185 0 0 0 370 0" fill="none" stroke="#a82024" strokeWidth="1" />

      {/* green body cutting through the ring */}
      <polygon points="905,496 909,496 909,568 905,568" fill="#2b4a50" />
      <polygon points="905,487 905,580 888,576" fill="#3db464" />
      <path d="M905 487v93" stroke="#244348" strokeWidth="1.5" />
      <polygon points="801,500 905,487 905,580 801,565" fill="url(#bodyGreen)" clipPath="url(#outerClip)" />
      <path d="M801 500v65" stroke="#234040" strokeWidth="2" />
      <path d="M810 500c1 22-1 44-8 62" fill="none" stroke="#32b04a" strokeWidth="1.6" />
      <path d="M836 532h40" stroke="#c04a20" strokeWidth="1" />

      {/* white wireframe sections */}
      <path d="M672 197 713 203V339H674V294L659 292Z" fill="none" stroke="#ffffff" strokeWidth="2" />
      <path d="M692 201 669 292" stroke="#ffffff" strokeWidth="2" />
      <path d="M801 478V448L905 433 909 447V478" fill="none" stroke="#ffffff" strokeWidth="2" />
      <path d="M802 451 905 437" stroke="#ffffff" strokeWidth="1.6" />
      <path d="M627 478.500H680" stroke="#cfcfcf" strokeWidth="1.5" />
      <path d="M680 478.500H977" stroke="#ffffff" strokeWidth="2" />
      <path d="M487 478.500H491" stroke="#ffffff" strokeWidth="1.500" />

      {/* work coordinate system */}
      <path d="M626.500 425V479" stroke="#2fd43a" strokeWidth="2" />
      <g fill="#dc7a44" fontSize="12" fontFamily="Liberation Sans, sans-serif" letterSpacing="1">
        <text x="627" y="403">YC</text>
        <text x="627" y="479">ZC</text>
        <text x="702" y="479">XC</text>
      </g>

      {/* absolute csys */}
      <path d="M127 640V684" stroke="#22e022" strokeWidth="2" />
      <path d="M127 685H170" stroke="#e01010" strokeWidth="2" />
      <polygon points="123,681 131,681 132,689 124,690" fill="#7a80a8" />
      <text x="124" y="689" fontSize="9" fill="#10209a" fontFamily="Liberation Sans, sans-serif">Z</text>
      <text x="124" y="636" fontSize="10" fill="#7ab87a" fontFamily="Liberation Sans, sans-serif">Y</text>
      <text x="180" y="689" fontSize="10" fill="#e05050" fontFamily="Liberation Sans, sans-serif">X</text>
    </svg>
  );
}

function Viewport() {
  return (
    <div className="flex-1 relative border border-[#d97a3a] bg-[#e5e5e5] min-w-0">
      <ModelView />
      <span className="absolute left-[3px] bottom-[-1px] text-[13px] leading-[16px] tracking-[0.28px] text-[#e0651a] font-['Liberation_Sans',sans-serif] font-medium">#ACTIVE1 WORK Camera #ACTIVE1</span>
    </div>
  );
}

function Taskbar() {
  return (
    <div className="h-[30px] shrink-0 flex items-stretch bg-[linear-gradient(180deg,#1c50b4_0%,#3a78e4_10%,#2a62d8_22%,#2a64da_85%,#1c4ca8_100%)] text-white text-[12px]">
      <div className="w-[95px] shrink-0 rounded-r-[10px] bg-[linear-gradient(180deg,#2f7a2f_0%,#4fa04a_15%,#3d8f3d_60%,#2c6c2c_100%)] flex items-center pl-[11px]">
        <svg viewBox="0 0 16 16" className="w-[18px] h-[18px]">
          <path d="M1 3c2-1 4-1 6 0v5C5 7 3 7 1 8z" fill="#e8602a" />
          <path d="M8 3c2 1 4 1 6 0v5c-2 1-4 1-6 0z" fill="#6cc040" />
          <path d="M1 9c2-1 4-1 6 0v5c-2-1-4-1-6 0z" fill="#3a8cf0" />
          <path d="M8 9c2 1 4 1 6 0v5c-2 1-4 1-6 0z" fill="#f4c830" />
        </svg>
        <span className="ml-[6px] text-[19px] italic font-['Noto_Sans_CJK_SC',serif] font-light">开始</span>
      </div>
      <div className="w-[87px] shrink-0 flex items-center pl-[15px] gap-[5px]">
        <svg viewBox="0 0 16 18" className="w-[15px] h-[18px]"><path d="M3 6h10l-2 11H5z" fill="#c8c0a8" /><path d="M5 1l2 6M8 1v6M12 2l-2 5" stroke="#d04040" strokeWidth="1.500" /></svg>
        <svg viewBox="0 0 16 18" className="w-[15px] h-[18px]"><rect width="16" height="18" fill="#1010d0" /><path d="M8 3v11M4 9c0 6 8 6 8 0M5 5h6" fill="none" stroke="#f0e040" strokeWidth="1.500" /></svg>
        <svg viewBox="0 0 16 18" className="w-[15px] h-[18px]"><rect x="2" y="2" width="12" height="14" rx="2" fill="#dce8f8" /><circle cx="8" cy="9" r="4" fill="none" stroke="#2a60c0" strokeWidth="2" /></svg>
      </div>
      <div className="flex-1 flex items-center gap-[2px] min-w-0">
        {taskButtons.map((b, i) => (
          <div key={i} className={`w-[94px] h-[27px] shrink-0 rounded-[3px] flex items-center pl-[8px] gap-[5px] ${b.active ? 'bg-[#1e4fb0]' : 'bg-[#3c78e6]'}`}>
            <span className="shrink-0 flex items-center">{b.icon}</span>
            <span className="whitespace-pre">
              <span className="font-['Liberation_Mono','Noto_Sans_CJK_SC',monospace]">{b.label}</span>
              <span className="font-['Liberation_Sans',sans-serif]">{b.dots}</span>
            </span>
          </div>
        ))}
      </div>
      <div className="w-[77px] shrink-0 bg-[linear-gradient(180deg,#1078c8_0%,#1a9cf0_15%,#1488dc_85%,#0f6ec0_100%)] border-l border-[#0c4a98] flex items-center relative pl-[9px]">
        <div className="absolute -left-[9px] top-[6px] w-[17px] h-[17px] rounded-full bg-[#dcecff] border border-[#2a60c0] flex items-center justify-center">
          <svg viewBox="0 0 8 10" className="w-[8px] h-[10px]"><path d="M6 1 2 5l4 4" fill="none" stroke="#1c4ca8" strokeWidth="2" /></svg>
        </div>
        <svg viewBox="0 0 18 18" className="w-[17px] h-[17px]"><rect x="7" y="2" width="10" height="8" fill="#6878b0" stroke="#d0d8f0" strokeWidth="0.6" /><rect x="1" y="7" width="10" height="8" fill="#5060a0" stroke="#d0d8f0" strokeWidth="0.6" /><path d="M3 17h7" stroke="#e0e0e0" /></svg>
        <span className="ml-[7px] text-[12px] font-['Liberation_Sans',sans-serif] text-[#eaf4ff]">20:57</span>
      </div>
    </div>
  );
}

export default function App() {
  return (
    <div className="w-[1280px] h-[800px] relative overflow-hidden flex flex-col bg-[#dcdcdc] font-['Noto_Sans_CJK_SC','Liberation_Sans',sans-serif]">
      <TitleBar />
      <MenuBar />
      <RowOne />
      <RowTwo />
      <FilterBar />
      <CueBar />
      <TabStrip />
      <div className="flex-1 flex min-h-0">
        <LeftDock />
        <div className="w-[11px] shrink-0 bg-[#ececec]" />
        <div className="flex-1 flex pb-[3px] pr-[2px] bg-[#ececec] min-w-0">
          <Viewport />
        </div>
      </div>
      <Taskbar />
      <ImeWindow />
    </div>
  );
}
